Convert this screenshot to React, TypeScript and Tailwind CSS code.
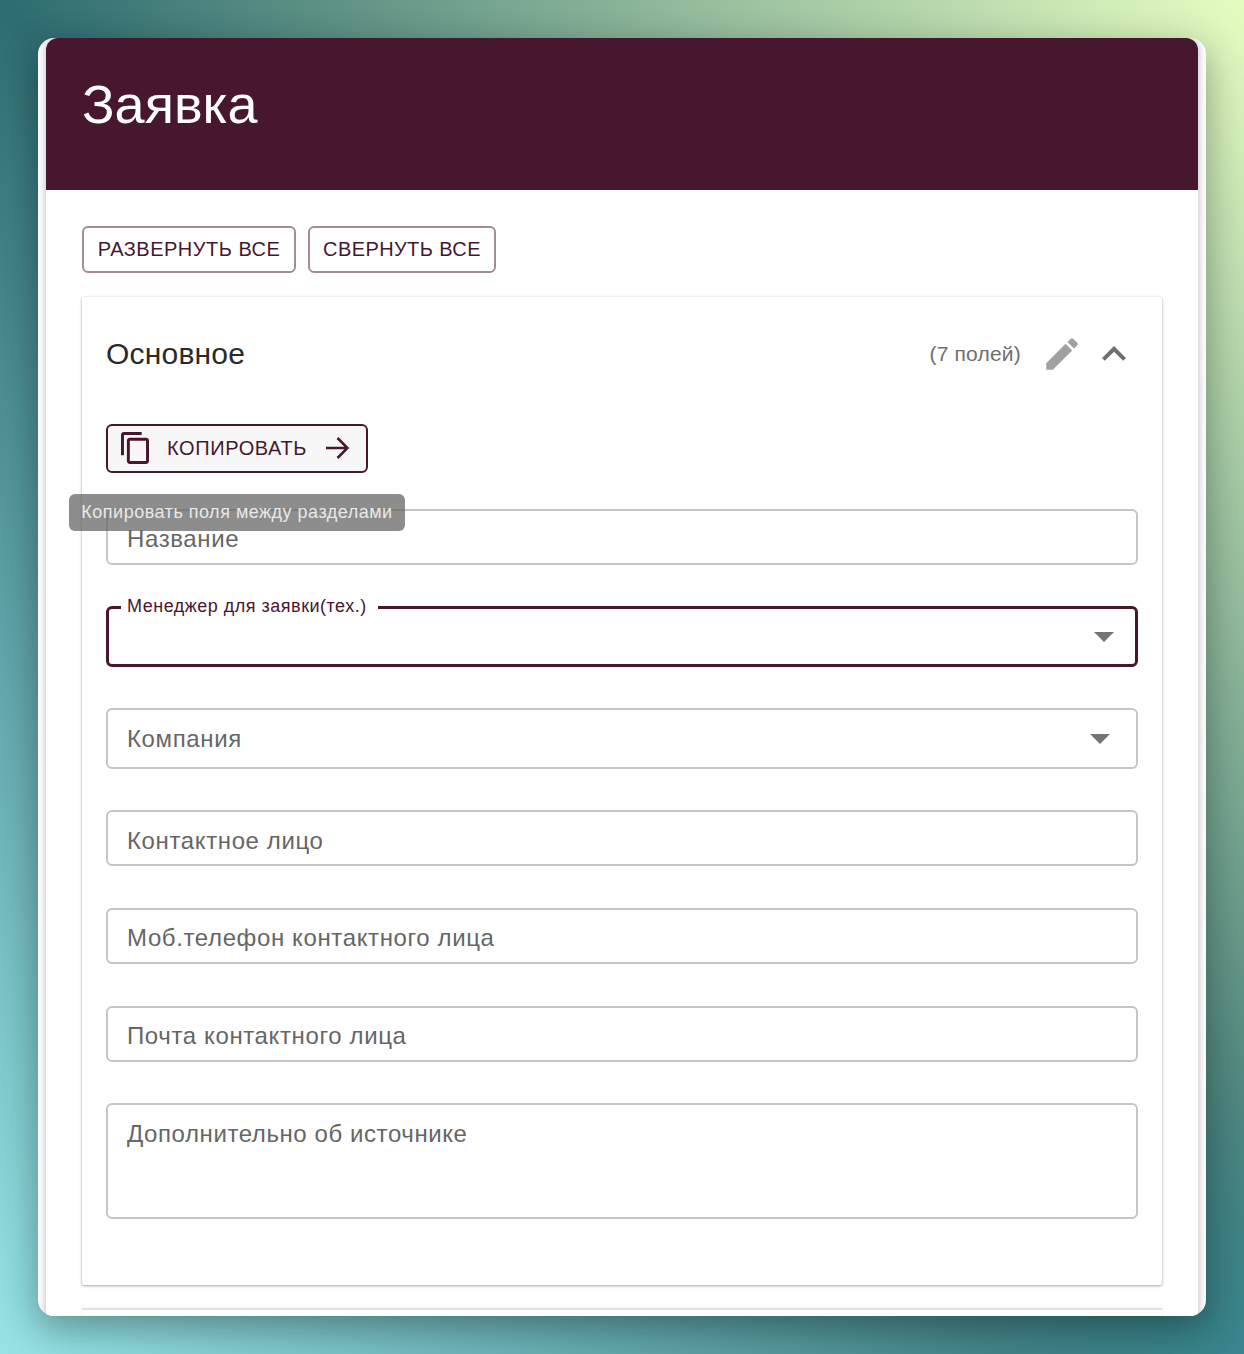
import React from 'react';

const textFields = [
  { label: 'Контактное лицо', className: 'h-[56px] mb-[42px] pt-[5px]' },
  { label: 'Моб.телефон контактного лица', className: 'h-[56px] mb-[42px] pt-[3px]' },
  { label: 'Почта контактного лица', className: 'h-[56px] mb-[41px] pt-[3px]' },
];

function Caret() {
  return (
    <svg width="20" height="10" viewBox="0 0 20 10" className="shrink-0">
      <path d="M0 0h20L10 10z" fill="#757575" />
    </svg>
  );
}

function Field({ label, className }: { label: string; className: string }) {
  return (
    <div
      className={`flex items-center border-2 border-[#c6c6c6] rounded-[6px] pl-[19px] text-[24px] leading-[28px] tracking-[0.62px] text-[#666666] ${className}`}
    >
      {label}
    </div>
  );
}

export default function App() {
  return (
    <div className="h-[1354px] overflow-hidden p-[38px] bg-[radial-gradient(circle_at_100%_100%,rgba(70,165,175,0.45),transparent_260px),linear-gradient(to_top_right,#96e3e6_0%,#2e6c70_50%,#e6fcc0_100%)] font-['Liberation_Sans',Arial,sans-serif]">
      <div className="h-[1278px] px-[8px] bg-white rounded-[16px] overflow-hidden shadow-[0_12px_36px_rgba(0,0,0,0.33)]">
        <div className="min-h-[1300px] bg-white rounded-t-[12px] shadow-[0_0_8px_rgba(40,40,70,0.35)]">
          <header className="h-[152px] bg-[#47172f] rounded-t-[12px] pl-[36px] pt-[36px]">
            <h1 className="text-[54px] leading-[60px] text-white">Заявка</h1>
          </header>

          <div className="px-[36px] pt-[36px]">
            <div className="flex gap-[12px] mb-[24px]">
              <button className="h-[47px] w-[214px] pb-[2px] border-2 border-[#a58b98] rounded-[6px] text-[20px] tracking-[0.5px] text-[#47172f]">
                РАЗВЕРНУТЬ ВСЕ
              </button>
              <button className="h-[47px] w-[188px] pb-[2px] border-2 border-[#a58b98] rounded-[6px] text-[20px] tracking-[0.4px] text-[#47172f]">
                СВЕРНУТЬ ВСЕ
              </button>
            </div>

            <section className="h-[988px] px-[24px] rounded-[2px] shadow-[0_1px_3px_rgba(0,0,0,0.35),0_0_2px_rgba(0,0,0,0.08)]">
              <div className="h-[127px] pb-[13px] flex items-center">
                <h2 className="text-[30px] leading-[34px] tracking-[0.2px] text-[#2a2a2a]">Основное</h2>
                <span className="ml-auto text-[21px] tracking-[0.2px] text-[#6f6f6f]">(7 полей)</span>
                <svg width="42" height="42" viewBox="0 0 24 24" className="ml-[20px]" fill="#a0a0a0">
                  <path d="M3 17.25V21h3.75L17.81 9.94l-3.75-3.75L3 17.25zM20.71 7.04c.39-.39.39-1.02 0-1.41l-2.34-2.34c-.39-.39-1.02-.39-1.41 0l-1.83 1.83 3.75 3.75 1.83-1.83z" />
                </svg>
                <svg width="48" height="48" viewBox="0 0 24 24" className="ml-[7px]" fill="#6f6f6f">
                  <path d="M12 8l-6 6 1.41 1.41L12 10.83l4.59 4.58L18 14z" />
                </svg>
              </div>

              <div className="relative mb-[36px]">
                <button className="h-[49px] w-[262px] pb-[2px] flex items-center pl-[13px] border-2 border-[#47172f] rounded-[6px] bg-[#f7f7f7] text-[20px] tracking-[0.6px] text-[#47172f]">
                  <svg width="28" height="32" viewBox="2 1 19 22" fill="#47172f" className="shrink-0 mr-[18px]" preserveAspectRatio="none">
                    <path d="M16 1H4c-1.100 0-2 .9-2 2v14h2V3h12V1zm3 4H8c-1.100 0-2 .9-2 2v14c0 1.100.9 2 2 2h11c1.100 0 2-.9 2-2V7c0-1.100-.9-2-2-2zm0 16H8V7h11v14z" />
                  </svg>
                  КОПИРОВАТЬ
                  <svg width="24" height="24" viewBox="0 0 24 24" fill="none" stroke="#47172f" strokeWidth="2.6" className="ml-[18px]">
                    <path d="M1 12h21M12.500 2l10 10-10 10" />
                  </svg>
                </button>
                <div className="absolute left-[-37px] top-[70px] z-10 h-[37px] w-[336px] flex items-center justify-center rounded-[6px] bg-[rgba(97,97,97,0.72)] text-[18px] tracking-[0.5px] text-[#e8e8e8] whitespace-nowrap">
                  Копировать поля между разделами
                </div>
              </div>

              <Field label="Название" className="h-[56px] mb-[41px] pt-[3px]" />

              <div className="relative h-[61px] mb-[41px] border-[3px] border-[#47172f] rounded-[6px] flex items-center justify-end pr-[21px]">
                <span className="absolute left-[12px] top-[-13px] bg-white pl-[6px] pr-[11px] text-[18px] leading-[20px] tracking-[0.5px] text-[#47172f]">
                  Менеджер для заявки(тех.)
                </span>
                <Caret />
              </div>

              <div className="h-[61px] mb-[41px] flex items-center justify-between pl-[19px] pr-[26px] border-2 border-[#c6c6c6] rounded-[6px] text-[24px] tracking-[0.62px] text-[#666666]">
                Компания
                <Caret />
              </div>

              {textFields.map((f) => (
                <Field key={f.label} label={f.label} className={f.className} />
              ))}

              <div className="h-[116px] border-2 border-[#c6c6c6] rounded-[6px] pl-[19px] pt-[15px] text-[24px] leading-[28px] tracking-[0.58px] text-[#666666]">
                Дополнительно об источнике
              </div>
            </section>

            <div className="h-[40px] mt-[23px] border-t-2 border-[#e2e2e2] shadow-[0_0_2px_rgba(0,0,0,0.1)]" />
          </div>
        </div>
      </div>
    </div>
  );
}
